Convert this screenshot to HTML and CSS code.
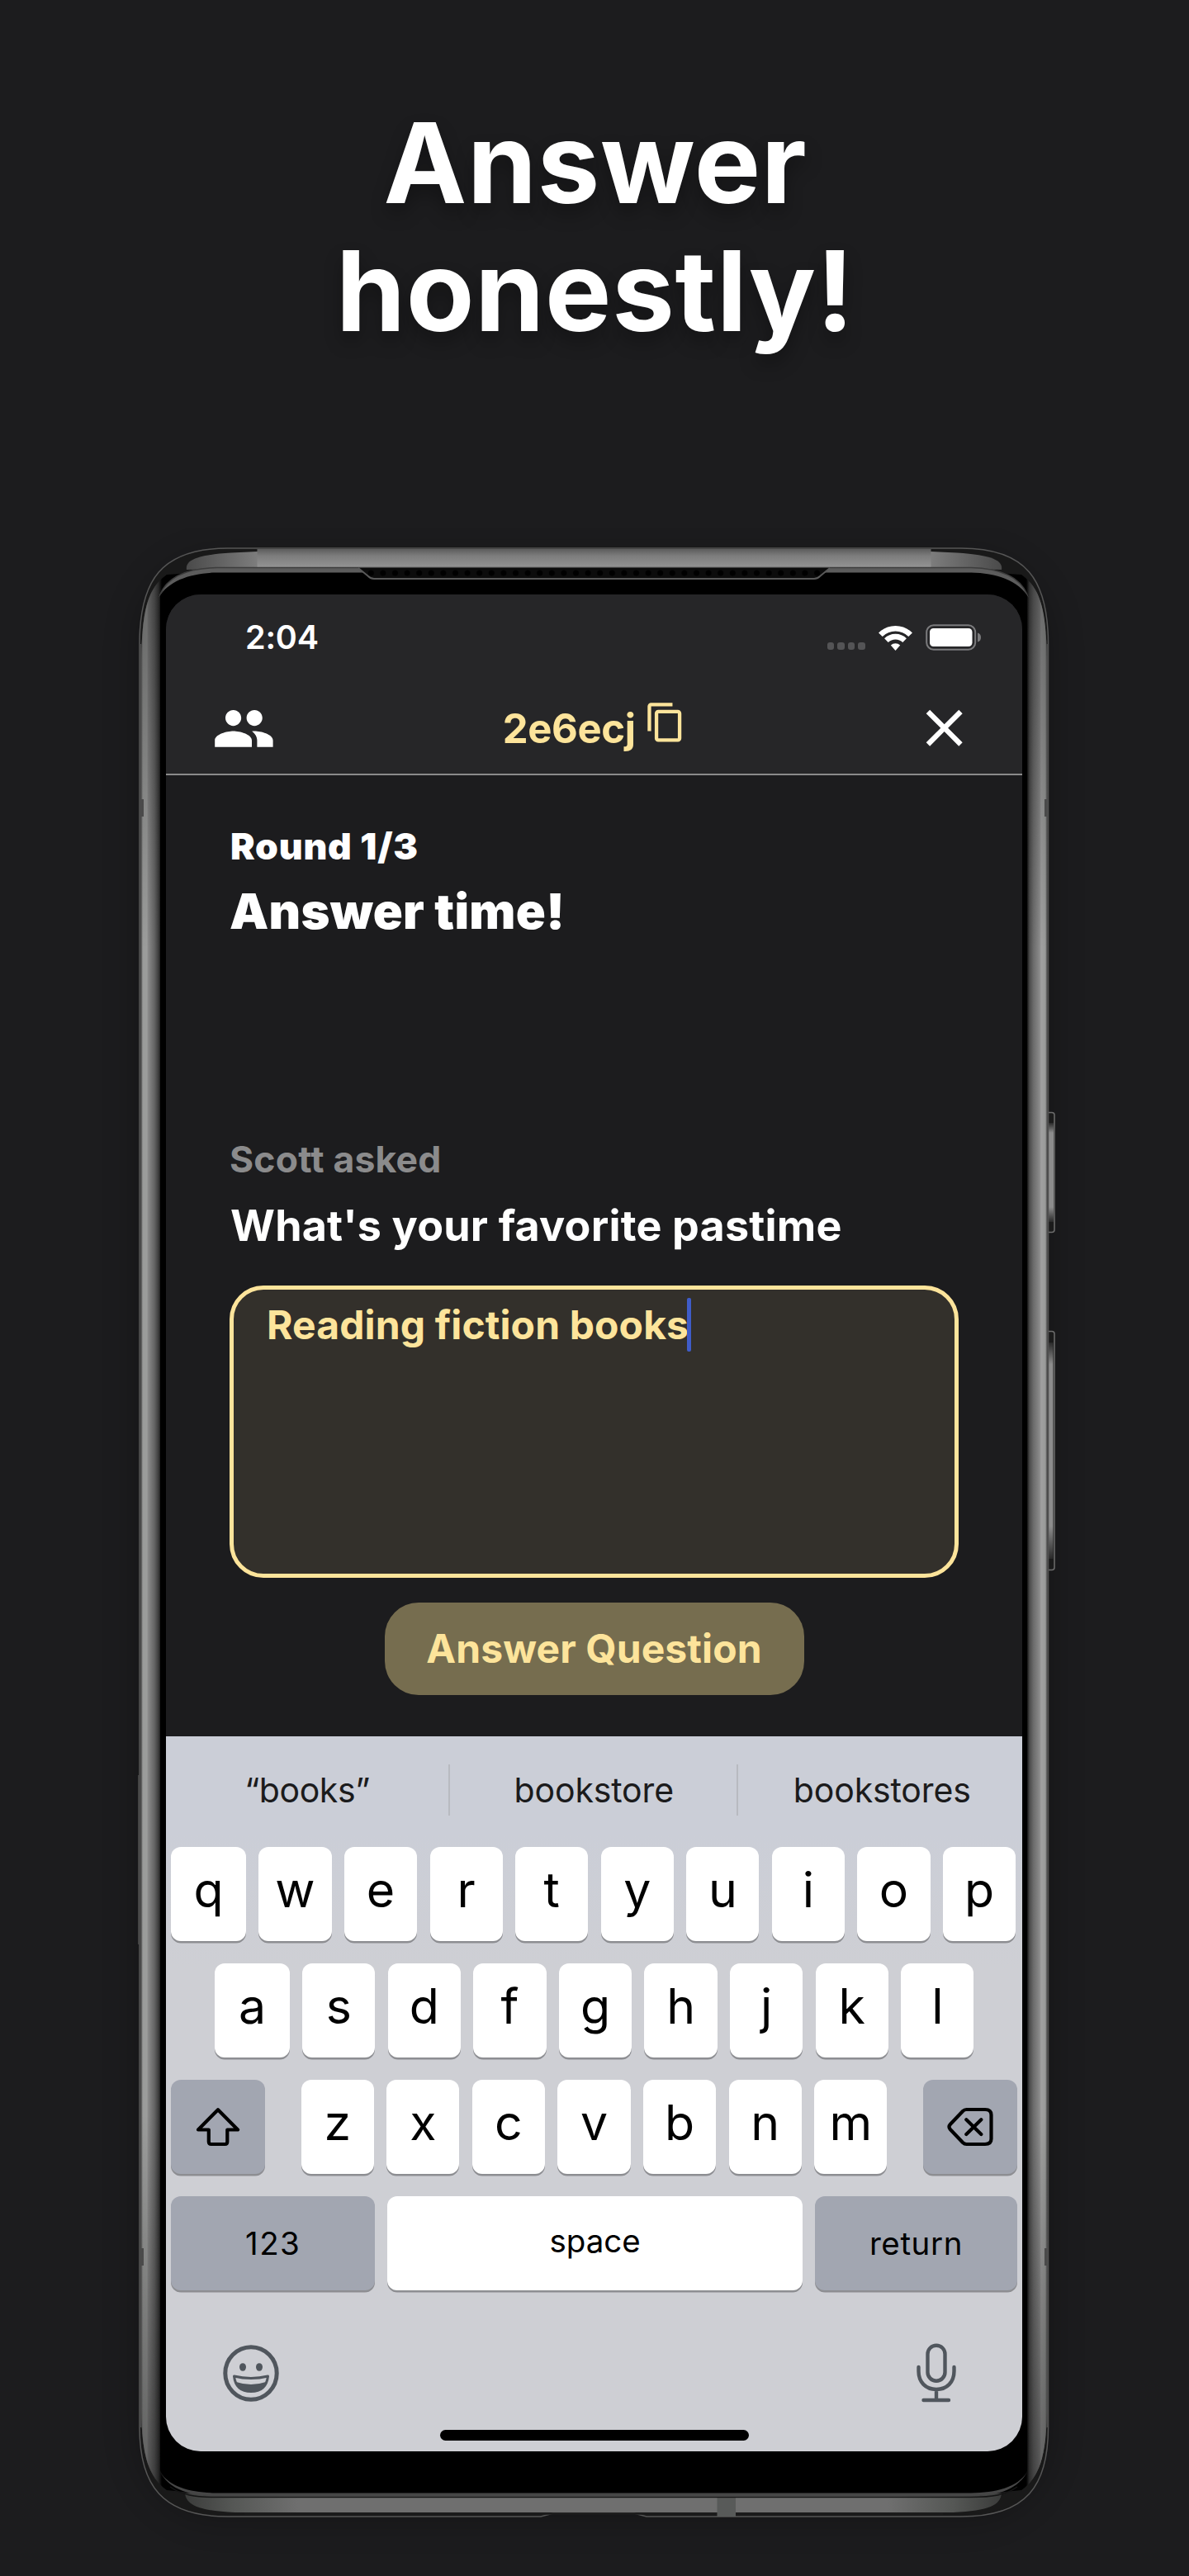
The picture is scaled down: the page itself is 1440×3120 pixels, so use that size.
FILE: index.html
```
<!DOCTYPE html>
<html lang="en">
<head>
<meta charset="utf-8">
<title>Answer honestly!</title>
<link rel="stylesheet" href="styles.css">
</head>
<body>
<h1 class="headline">Answer<br>honestly!</h1>

<div class="phone">
  <svg class="frame" viewBox="0 640 1440 2480" aria-hidden="true">
    <defs>
      <linearGradient id="gTop" x1="0" y1="0" x2="0" y2="1"><stop offset="0" stop-color="#5c5c5c"/><stop offset=".35" stop-color="#7c7c7c"/><stop offset="1" stop-color="#959595"/></linearGradient>
      <linearGradient id="gTopL" x1="0" y1="0" x2="1" y2="0"><stop offset="0" stop-color="#4a4a4a"/><stop offset="1" stop-color="#7d7d7d"/></linearGradient>
      <linearGradient id="gTopR" x1="1" y1="0" x2="0" y2="0"><stop offset="0" stop-color="#4a4a4a"/><stop offset="1" stop-color="#7d7d7d"/></linearGradient>
      <linearGradient id="gL" gradientUnits="userSpaceOnUse" x1="171" y1="0" x2="196" y2="0"><stop offset="0" stop-color="#747474"/><stop offset=".1" stop-color="#9a9b9a"/><stop offset=".28" stop-color="#9c9d9c"/><stop offset=".34" stop-color="#8a8a8a"/><stop offset=".65" stop-color="#636363"/><stop offset=".85" stop-color="#3a3a3a"/><stop offset="1" stop-color="#000"/></linearGradient>
      <linearGradient id="gR" gradientUnits="userSpaceOnUse" x1="1268" y1="0" x2="1243" y2="0"><stop offset="0" stop-color="#747474"/><stop offset=".1" stop-color="#9a9b9a"/><stop offset=".28" stop-color="#a0a0a0"/><stop offset=".36" stop-color="#8a8a8a"/><stop offset=".65" stop-color="#6c6c6c"/><stop offset=".85" stop-color="#4a4a4a"/><stop offset="1" stop-color="#000"/></linearGradient>
      <linearGradient id="gBot" gradientUnits="userSpaceOnUse" x1="222" y1="0" x2="1214" y2="0"><stop offset="0" stop-color="#3a3b3a"/><stop offset=".06" stop-color="#555755"/><stop offset=".14" stop-color="#6f6f6f"/><stop offset=".86" stop-color="#6f6f6f"/><stop offset=".94" stop-color="#555755"/><stop offset="1" stop-color="#3a3b3a"/></linearGradient>
      <linearGradient id="gFade" gradientUnits="userSpaceOnUse" x1="0" y1="690" x2="0" y2="1150"><stop offset="0" stop-color="#000" stop-opacity=".35"/><stop offset="1" stop-color="#000" stop-opacity="0"/></linearGradient>
      <linearGradient id="gFadeB" gradientUnits="userSpaceOnUse" x1="0" y1="3020" x2="0" y2="2560"><stop offset="0" stop-color="#000" stop-opacity=".4"/><stop offset="1" stop-color="#000" stop-opacity="0"/></linearGradient>
      <linearGradient id="gBtn" x1="0" y1="0" x2="0" y2="1"><stop offset="0" stop-color="#2a2a2a"/><stop offset=".1" stop-color="#8c8c8c"/><stop offset=".85" stop-color="#8c8c8c"/><stop offset="1" stop-color="#2a2a2a"/></linearGradient>
      <pattern id="mesh" patternUnits="userSpaceOnUse" x="442" y="688" width="14.6" height="13"><rect width="14.6" height="13" fill="#0c0c0c"/><circle cx="7.3" cy="6" r="3.6" fill="#000"/></pattern>
      <filter id="soft" x="-20%" y="-20%" width="140%" height="140%"><feGaussianBlur stdDeviation="22"/></filter>
    </defs>

    <rect x="168" y="676" width="1102" height="2373" rx="100" fill="#000" opacity=".28" filter="url(#soft)"/>

    <!-- side buttons -->
    <rect x="1266" y="1347.500" width="11" height="145" rx="3" fill="#1b1b1b" stroke="#6d6d6d" stroke-width="1.500"/>
    <rect x="1269" y="1360" width="7" height="120" fill="url(#gBtn)"/>
    <rect x="1266" y="1612.500" width="11" height="289" rx="3" fill="#1b1b1b" stroke="#6d6d6d" stroke-width="1.500"/>
    <rect x="1270" y="1626" width="5.500" height="262" fill="url(#gBtn)"/>

    <!-- outer shell -->
    <path d="M169 780C169 702 196 664 276 664H1164C1243 664 1269.500 702 1269.500 780V2940C1269.500 3010 1244 3048 1164 3048H783L768 3044H670L655 3048H276C196 3048 169 3010 169 2940Z" fill="#191919" stroke="#565656" stroke-width="1.500"/>
    <!-- side rails -->
    <path d="M171 800C172 735 180 712 202 696L262 692V3022L202 3016C180 3000 172 2975 171 2920Z" fill="url(#gL)"/>
    <path d="M1268 800C1267 735 1259 712 1237 696L1177 692V3022L1237 3016C1259 3000 1267 2975 1268 2920Z" fill="url(#gR)"/>
    <path d="M171 1150V800C172 735 180 712 202 696H262V1150ZM1268 1150V800C1267 735 1259 712 1237 696H1177V1150Z" fill="url(#gFade)"/>
    <path d="M171 2560V2920C172 2975 180 3000 202 3016H262V2560ZM1268 2560V2920C1267 2975 1259 3000 1237 3016H1177V2560Z" fill="url(#gFadeB)"/>
    <path d="M170.500 780V2940M1268.500 780V2940" stroke="#4b4b4b" stroke-width="2"/>
    <path d="M172.500 968V989M172.500 2723V2744M1266.500 968V989M1266.500 2723V2744" stroke="#4a4a4a" stroke-width="3"/>
    <path d="M168 2150V2355" stroke="#4e4e4e" stroke-width="1.500"/>

    <!-- top strip -->
    <path d="M226 690C224 679 238 672 280 669.500L312 668V688Z" fill="url(#gTopL)"/>
    <path d="M1213 690C1215 679 1201 672 1159 669.500L1127 668V688Z" fill="url(#gTopR)"/>
    <rect x="311.500" y="665" width="816" height="23" fill="url(#gTop)"/>

    <!-- bottom strip -->
    <path d="M224 3020C226 3034 240 3041 285 3043H1154C1199 3041 1211 3034 1213 3020Z" fill="url(#gBot)"/>
    <path d="M296 3044.500H1142" stroke="#1c1c1c" stroke-width="2.500"/>
    <rect x="868.500" y="3024" width="22.500" height="24" fill="#585a59"/>

    <!-- bezel -->
    <path d="M194 756V722C206 702 232 688 262 688H1176C1206 688 1232 702 1244 722V2992C1232 3012 1206 3023 1176 3023H262C232 3023 206 3012 194 2992Z" fill="#000"/>
    <path d="M192 724C201 699 225 688.500 262 687.500H1176C1213 688.500 1237 699 1246 724C1234 703 1206 694 1176 693.500H262C232 694 204 703 192 724Z" fill="#5c5c5c"/>
    <path d="M194 720C203 698 226 688.500 262 687.500H1176C1212 688.500 1235 698 1244 720" fill="none" stroke="#3c3c3c" stroke-width="1.500"/>
    <path d="M194 2994C204 3013 226 3023 262 3023.500H1176C1212 3023 1234 3013 1244 2994C1232 3013 1206 3019 1176 3019.500H262C232 3019 206 3013 194 2994Z" fill="#464646"/>
    <path d="M206 3012C220 3022 236 3024.500 262 3024.500H1176C1202 3024.500 1218 3022 1232 3012" fill="none" stroke="#151515" stroke-width="1.500"/>

    <!-- earpiece -->
    <path d="M434 688L446 698Q449 701 453 701H986Q990 701 993 698L1005 688Z" fill="url(#mesh)"/>
    <path d="M434 688L446 698Q449 701 453 701H986Q990 701 993 698L1005 688" fill="none" stroke="#5a5a5a" stroke-width="1.800"/>
  </svg>

  <main class="screen">
    <header class="top">
      <div class="status">
        <span class="time">2:04</span>
        <div class="indicators">
          <span class="dots"><i></i><i></i><i></i><i></i></span>
          <svg class="wifi" viewBox="0 0 41 31"><g fill="none" stroke="#fff" stroke-width="6.600"><path d="M2.400 11.800A25.500 25.500 0 0 1 38.600 11.800"/><path d="M9.400 18.700A15.800 15.800 0 0 1 31.600 18.700"/></g><path d="M20.500 31L14.800 24.600A8.200 8.200 0 0 1 26.200 24.600Z" fill="#fff"/></svg>
          <svg class="battery" viewBox="0 0 68 32"><rect x="1.200" y="1.200" width="59" height="29.600" rx="8.500" fill="none" stroke="#7b7b7d" stroke-width="2"/><rect x="5" y="5" width="51.500" height="22" rx="4.500" fill="#fff"/><path d="M63 10.500Q67 11.500 67 16T63 21.500Z" fill="#7b7b7d"/></svg>
        </div>
      </div>
      <nav class="nav">
        <svg class="people" viewBox="0 0 24 24" fill="#fff"><path d="M16 11c1.660 0 2.990-1.340 2.990-3S17.660 5 16 5c-1.660 0-3 1.340-3 3s1.340 3 3 3zm-8 0c1.660 0 2.990-1.340 2.990-3S9.660 5 8 5C6.340 5 5 6.340 5 8s1.340 3 3 3zm0 2c-2.330 0-7 1.170-7 3.500V19h14v-2.500c0-2.330-4.670-3.500-7-3.500zm8 0c-.29 0-.62.02-.97.05 1.160.84 1.970 1.970 1.970 3.450V19h6v-2.500c0-2.330-4.670-3.500-7-3.500z"/></svg>
        <div class="room">
          <span>2e6ecj</span>
          <svg class="copy" viewBox="0 0 24 24" fill="#fde49b"><path d="M16 1H4c-1.100 0-2 .9-2 2v14h2V3h12V1zm3 4H8c-1.100 0-2 .9-2 2v14c0 1.100.9 2 2 2h11c1.100 0 2-.9 2-2V7c0-1.100-.9-2-2-2zm0 16H8V7h11v14z"/></svg>
        </div>
        <svg class="close" viewBox="0 0 24 24" fill="#fff"><path d="M19 6.410 17.590 5 12 10.590 6.410 5 5 6.410 10.590 12 5 17.590 6.410 19 12 13.410 17.590 19 19 17.590 13.410 12z"/></svg>
      </nav>
    </header>

    <section class="content">
      <p class="round">Round 1/3</p>
      <h2 class="title">Answer time!</h2>
      <p class="asker">Scott asked</p>
      <p class="question">What's your favorite pastime</p>
      <div class="field"><span>Reading fiction books</span><i class="caret"></i></div>
      <button class="submit">Answer Question</button>
    </section>

    <section class="keyboard">
      <div class="suggest"><span>“books”</span><b></b><span>bookstore</span><b></b><span>bookstores</span></div>
      <div class="rows">
        <div class="row"><kbd class="wide">q</kbd><kbd>w</kbd><kbd>e</kbd><kbd>r</kbd><kbd>t</kbd><kbd>y</kbd><kbd>u</kbd><kbd>i</kbd><kbd>o</kbd><kbd>p</kbd></div>
        <div class="row mid"><kbd class="wide">a</kbd><kbd>s</kbd><kbd>d</kbd><kbd>f</kbd><kbd>g</kbd><kbd>h</kbd><kbd>j</kbd><kbd>k</kbd><kbd>l</kbd></div>
        <div class="row spread">
          <kbd class="fn"><svg width="54" height="48" viewBox="0 0 54 48" fill="none" stroke="#000" stroke-width="4.200" stroke-linejoin="round"><path d="M27 3.200L51 27.500H38.300V42Q38.300 45 35.500 45H18.700Q15.800 45 15.800 42V27.500H3Z"/></svg></kbd>
          <div class="row"><kbd>z</kbd><kbd>x</kbd><kbd>c</kbd><kbd>v</kbd><kbd>b</kbd><kbd>n</kbd><kbd>m</kbd></div>
          <kbd class="fn"><svg width="56" height="48" viewBox="0 0 56 48" fill="none" stroke="#000" stroke-width="4.200" stroke-linecap="round" stroke-linejoin="round"><path d="M23.500 3H46Q53.500 3 53.500 9.500V38.500Q53.500 45 46 45H23.500Q21 45 19 43L3.800 27Q1.200 24 3.800 21L19 5Q21 3 23.500 3ZM23.300 15.300L41.300 33M41.300 15.300L23.300 33"/></svg></kbd>
        </div>
        <div class="row"><kbd class="fn num">123</kbd><kbd class="space">space</kbd><kbd class="fn ret">return</kbd></div>
      </div>
      <div class="tools">
        <svg width="68" height="69" viewBox="0 0 68 69"><ellipse cx="34" cy="34.500" rx="31.200" ry="31.700" fill="none" stroke="#50565d" stroke-width="5"/><ellipse cx="24" cy="27" rx="4" ry="4.800" fill="#50565d"/><ellipse cx="44" cy="27" rx="4" ry="4.800" fill="#50565d"/><path d="M13.500 38Q34 43 54.500 38C53 51 45 56.500 34 56.500S15 51 13.500 38Z" fill="none" stroke="#50565d" stroke-width="3" stroke-linejoin="round"/><path d="M16 45Q34 51 52 45C49 53 42 57 34 57S19 53 16 45Z" fill="#50565d"/></svg>
        <svg width="48" height="72" viewBox="0 0 48 72" fill="none" stroke="#50565d" stroke-width="4.400" stroke-linecap="round"><rect x="13.500" y="2.700" width="21" height="43" rx="10.500"/><path d="M2.500 29V34C2.500 47 11 56 24 56S45.500 47 45.500 34V29M24 56V69M8.500 69H39"/></svg>
      </div>
      <div class="home"></div>
    </section>
  </main>
</div>
</body>
</html>
```
FILE: styles.css
```
* { box-sizing: border-box; }

body {
  margin: 0;
  width: 1440px;
  height: 3120px;
  overflow: hidden;
  background: #1c1c1e;
  color: #fff;
  font-family: Inter, "Liberation Sans", sans-serif;
}

p, h1, h2 { margin: 0; }

.headline {
  height: 640px;
  padding: 120.4px 0 0 2px;
  text-align: center;
  font-size: 135px;
  font-weight: 700;
  line-height: 154.3px;
  letter-spacing: 0.7px;
  text-shadow: 0 12px 22px rgba(0, 0, 0, 0.3);
}

.phone {
  position: relative;
  height: 2480px;
  padding: 80px 202px 151px 201px;
}

.frame {
  position: absolute;
  inset: 0;
  width: 1440px;
  height: 2480px;
}

.screen {
  position: relative;
  display: flex;
  flex-direction: column;
  height: 2249px;
  border-radius: 42px;
  overflow: hidden;
  background: #1c1c1e;
}

.top {
  height: 218.5px;
  background: #262628;
  border-bottom: 2px solid #8a8a8b;
}

.status {
  display: flex;
  justify-content: space-between;
  align-items: center;
  height: 104px;
  padding: 0 49px 0 96px;
}

.time {
  font-size: 39.5px;
  font-weight: 600;
  letter-spacing: -0.2px;
}

.indicators { display: flex; align-items: center; }

.dots {
  display: flex;
  gap: 4px;
  margin: 21px 16px 0 0;
}

.dots i {
  width: 8.6px;
  height: 9px;
  border-radius: 3px;
  background: #545456;
}

.wifi { width: 41px; height: 31px; margin-right: 16px; }
.battery { width: 68px; height: 32px; }

.nav {
  display: grid;
  grid-template-columns: 1fr auto 1fr;
  align-items: center;
  height: 113px;
  padding: 3px 57px 0 56px;
}

.people { width: 76.8px; height: 76.8px; }
.close { width: 75.4px; height: 75.4px; justify-self: end; }

.room {
  display: flex;
  align-items: center;
  gap: 10.5px;
  padding-left: 2.5px;
  color: #fde49b;
  font-size: 49px;
  font-weight: 700;
  letter-spacing: -0.4px;
}

.copy { width: 51.7px; height: 51.7px; margin-bottom: 14px; }

.content {
  display: flex;
  flex-direction: column;
  height: 1164px;
  padding: 58.1px 77px 0;
}

.round {
  padding-left: 1px;
  font-size: 44.5px;
  font-weight: 900;
  line-height: 56px;
  letter-spacing: 0.8px;
}

.title {
  margin-top: 14px;
  font-size: 59.5px;
  font-weight: 900;
  line-height: 72px;
  letter-spacing: 0.3px;
}

.asker {
  margin-top: 237.2px;
  color: #8b8b8c;
  font-size: 44.5px;
  font-weight: 700;
  line-height: 56px;
  letter-spacing: 0.2px;
}

.question {
  margin-top: 19px;
  padding-left: 1px;
  font-size: 52px;
  font-weight: 700;
  line-height: 68px;
  letter-spacing: 0.2px;
}

.field {
  display: flex;
  align-items: flex-start;
  height: 354px;
  margin-top: 38.7px;
  padding: 10px 40px;
  border: 5.6px solid #fde49b;
  border-radius: 41px;
  background: #33302b;
  color: #fde49b;
  font-size: 48px;
  font-weight: 700;
  line-height: 65px;
  letter-spacing: 0.12px;
}

.caret {
  width: 5px;
  height: 65px;
  margin-left: -2px;
  border-radius: 2px;
  background: #3f5cc8;
}

.submit {
  align-self: center;
  width: 508px;
  height: 112px;
  margin-top: 29.5px;
  padding: 0;
  border: 0;
  border-radius: 41px;
  background: #766d4f;
  color: #fde49b;
  font: 700 48px Inter, "Liberation Sans", sans-serif;
  letter-spacing: 0.1px;
}

.keyboard {
  display: flex;
  flex-direction: column;
  height: 866.5px;
  background: linear-gradient(#cbced7 0, #cbced7 120px, #cecfd4 280px);
  color: #000;
}

.suggest {
  display: flex;
  align-items: center;
  height: 130px;
  margin-bottom: 4px;
  color: #1b1b1c;
  font-size: 41px;
  letter-spacing: -0.14px;
}

.suggest span { flex: none; width: 346.5px; padding-left: 2px; text-align: center; }
.suggest span:first-child { width: 342px; padding-left: 0; letter-spacing: -0.4px; }
.suggest span:last-child { width: 344.5px; padding-left: 5px; }
.suggest b { width: 2px; height: 62px; background: #b8bac0; }

.rows {
  display: flex;
  flex-direction: column;
  gap: 27.2px;
  padding: 0 6.4px;
}

.row { display: flex; gap: 15.4px; }
.mid { padding-left: 52.8px; }
.spread { justify-content: space-between; }

kbd {
  display: flex;
  justify-content: center;
  align-items: center;
  width: 88.2px;
  height: 114px;
  padding-bottom: 11px;
  border-radius: 12px;
  background: #fff;
  box-shadow: 0 2.5px 0 #8d8e92;
  font: 400 59px Inter, "Liberation Sans", sans-serif;
}

.wide { width: 90.6px; }

.fn {
  width: 113.4px;
  padding: 0;
  background: #a2a6b1;
  font-size: 38.5px;
  letter-spacing: 0.6px;
}

.num { width: 246.6px; letter-spacing: 1.4px; }
.ret { width: 244.4px; }

.space {
  width: 502.6px;
  padding-bottom: 6px;
  font-size: 38.5px;
}

.tools {
  display: flex;
  justify-content: space-between;
  align-items: center;
  height: 167px;
  padding: 33px 80px 0 69px;
}

.home {
  width: 374px;
  height: 12.5px;
  margin: 2px auto 0;
  border-radius: 7px;
  background: #000;
}
```
